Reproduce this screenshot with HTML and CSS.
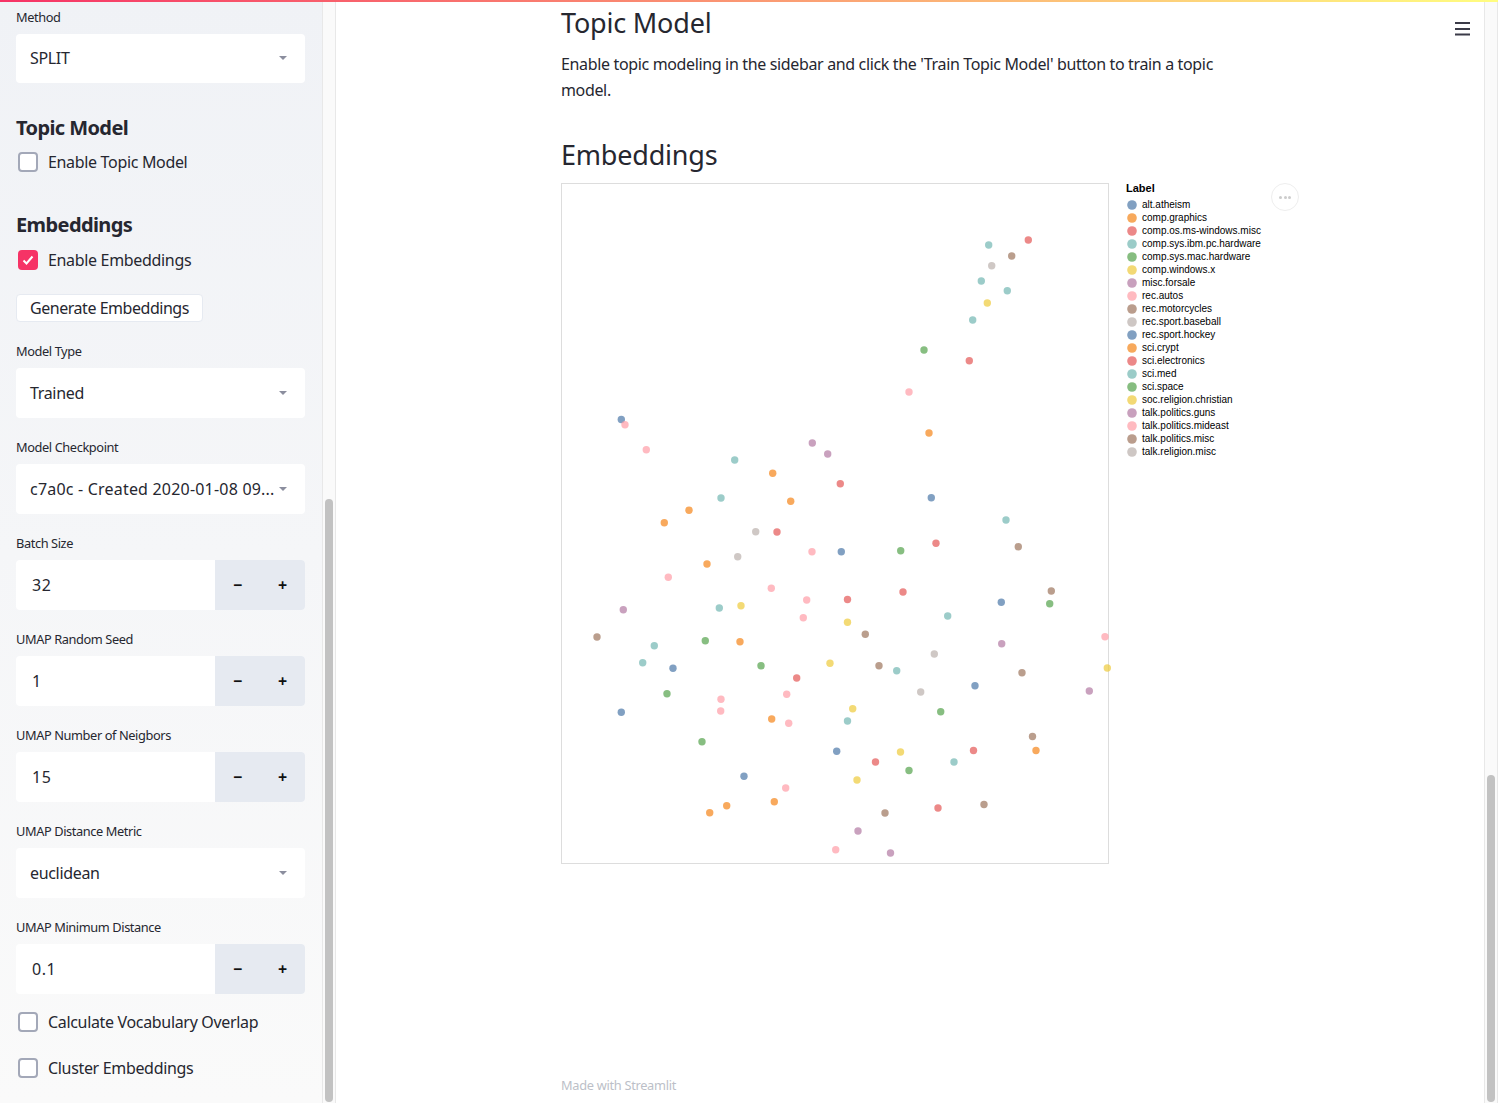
FILE: index.html
```html
<html>
  <head>
    <meta name="viewport" content="width=device-width, initial-scale=1.0">
    <link rel="stylesheet" href="styles.css">
  </head>
  <body>
    <div class="topBar"></div>

    <aside class="sidebar">
      <div class="field first">
        <label>Method</label>
        <div class="select short"><span>SPLIT</span><i class="caret"></i></div>
      </div>

      <h3 class="sideTitle topicTitle">Topic Model</h3>
      <div class="check"><span class="box"></span>Enable Topic Model</div>

      <h3 class="sideTitle embedTitle">Embeddings</h3>
      <div class="check"><span class="box on"><svg viewBox="0 0 20 20" width="20" height="20"><path d="M5.5 10.5l3 3 6-7" fill="none" stroke="#fff" stroke-width="2"/></svg></span>Enable Embeddings</div>
      <button class="genButton">Generate Embeddings</button>

      <div class="field">
        <label>Model Type</label>
        <div class="select"><span>Trained</span><i class="caret"></i></div>
      </div>
      <div class="field">
        <label>Model Checkpoint</label>
        <div class="select"><span class="checkpoint">c7a0c - Created 2020-01-08 09...</span><i class="caret"></i></div>
      </div>
      <div class="field">
        <label>Batch Size</label>
        <div class="number"><span class="value">32</span><span class="step">−</span><span class="step">+</span></div>
      </div>
      <div class="field">
        <label>UMAP Random Seed</label>
        <div class="number"><span class="value">1</span><span class="step">−</span><span class="step">+</span></div>
      </div>
      <div class="field">
        <label>UMAP Number of Neigbors</label>
        <div class="number"><span class="value">15</span><span class="step">−</span><span class="step">+</span></div>
      </div>
      <div class="field">
        <label>UMAP Distance Metric</label>
        <div class="select"><span>euclidean</span><i class="caret"></i></div>
      </div>
      <div class="field last">
        <label>UMAP Minimum Distance</label>
        <div class="number"><span class="value">0.1</span><span class="step">−</span><span class="step">+</span></div>
      </div>
      <div class="check"><span class="box"></span>Calculate Vocabulary Overlap</div>
      <div class="check spaced"><span class="box"></span>Cluster Embeddings</div>
    </aside>
    <div class="track"><div class="thumb sideThumb"></div></div>

    <main class="main">
      <h2>Topic Model</h2>
      <p>Enable topic modeling in the sidebar and click the 'Train Topic Model' button to train a topic<br>model.</p>
      <h2 class="embedHead">Embeddings</h2>

      <div class="chartRow">
        <div class="plot">
          <!-- viewBox is in page pixels so the points read like the screenshot -->
          <svg viewBox="562 184 546 679" width="546" height="679">
            <circle class="c0" cx="621.3" cy="419.5" r="3.7"/>
            <circle class="c7" cx="625" cy="424.7" r="3.7"/>
            <circle class="c7" cx="646.3" cy="449.7" r="3.7"/>
            <circle class="c6" cx="812.3" cy="443" r="3.7"/>
            <circle class="c6" cx="827.7" cy="454" r="3.7"/>
            <circle class="c3" cx="734.7" cy="460" r="3.7"/>
            <circle class="c1" cx="772.7" cy="473.3" r="3.7"/>
            <circle class="c2" cx="840.3" cy="483.7" r="3.7"/>
            <circle class="c3" cx="721" cy="498" r="3.7"/>
            <circle class="c1" cx="790.7" cy="501.3" r="3.7"/>
            <circle class="c1" cx="689" cy="510.3" r="3.7"/>
            <circle class="c1" cx="664.3" cy="522.7" r="3.7"/>
            <circle class="c9" cx="755.7" cy="531.7" r="3.7"/>
            <circle class="c2" cx="777" cy="532" r="3.7"/>
            <circle class="c7" cx="812" cy="551.7" r="3.7"/>
            <circle class="c0" cx="841.3" cy="551.7" r="3.7"/>
            <circle class="c9" cx="737.7" cy="556.7" r="3.7"/>
            <circle class="c1" cx="707" cy="564" r="3.7"/>
            <circle class="c7" cx="668.3" cy="577.3" r="3.7"/>
            <circle class="c7" cx="771.3" cy="588.3" r="3.7"/>
            <circle class="c7" cx="806.7" cy="600" r="3.7"/>
            <circle class="c2" cx="847.5" cy="599.5" r="3.7"/>
            <circle class="c5" cx="741" cy="605.7" r="3.7"/>
            <circle class="c3" cx="719.3" cy="608" r="3.7"/>
            <circle class="c6" cx="623.3" cy="609.7" r="3.7"/>
            <circle class="c7" cx="803.3" cy="617.7" r="3.7"/>
            <circle class="c5" cx="847.5" cy="622.3" r="3.7"/>

            <circle class="c2" cx="1028.3" cy="240" r="3.7"/>
            <circle class="c3" cx="988.7" cy="245" r="3.7"/>
            <circle class="c8" cx="1011.7" cy="256" r="3.7"/>
            <circle class="c9" cx="991.7" cy="265.7" r="3.7"/>
            <circle class="c3" cx="981.3" cy="281" r="3.7"/>
            <circle class="c3" cx="1007.3" cy="290.7" r="3.7"/>
            <circle class="c5" cx="987.3" cy="303" r="3.7"/>
            <circle class="c3" cx="972.7" cy="320" r="3.7"/>
            <circle class="c4" cx="924" cy="350" r="3.7"/>
            <circle class="c2" cx="969.3" cy="360.7" r="3.7"/>
            <circle class="c7" cx="909" cy="392" r="3.7"/>
            <circle class="c1" cx="929" cy="433" r="3.7"/>

            <circle class="c0" cx="931.3" cy="497.7" r="3.7"/>
            <circle class="c3" cx="1006" cy="520" r="3.7"/>
            <circle class="c2" cx="936" cy="543.3" r="3.7"/>
            <circle class="c4" cx="900.7" cy="550.7" r="3.7"/>
            <circle class="c8" cx="1018.3" cy="546.7" r="3.7"/>
            <circle class="c8" cx="1051.3" cy="591" r="3.7"/>
            <circle class="c4" cx="1049.7" cy="603.7" r="3.7"/>
            <circle class="c0" cx="1001.3" cy="602.3" r="3.7"/>
            <circle class="c2" cx="903" cy="592" r="3.7"/>
            <circle class="c3" cx="947.7" cy="616" r="3.7"/>
            <circle class="c8" cx="865.3" cy="634.3" r="3.7"/>
            <circle class="c7" cx="1105" cy="636.7" r="3.7"/>
            <circle class="c6" cx="1001.7" cy="643.7" r="3.7"/>
            <circle class="c9" cx="934.3" cy="654" r="3.7"/>
            <circle class="c8" cx="879" cy="665.7" r="3.7"/>
            <circle class="c3" cx="896.7" cy="670.7" r="3.7"/>
            <circle class="c8" cx="1022" cy="672.7" r="3.7"/>
            <circle class="c5" cx="1107.3" cy="668" r="3.7"/>
            <circle class="c0" cx="975" cy="685.7" r="3.7"/>
            <circle class="c9" cx="920.7" cy="692" r="3.7"/>
            <circle class="c6" cx="1089.3" cy="691" r="3.7"/>
            <circle class="c5" cx="852.7" cy="708.7" r="3.7"/>
            <circle class="c4" cx="940.7" cy="711.7" r="3.7"/>

            <circle class="c8" cx="597" cy="637" r="3.7"/>
            <circle class="c3" cx="654.3" cy="645.7" r="3.7"/>
            <circle class="c4" cx="705.3" cy="640.7" r="3.7"/>
            <circle class="c1" cx="740" cy="641.7" r="3.7"/>
            <circle class="c3" cx="642.7" cy="662.7" r="3.7"/>
            <circle class="c0" cx="673" cy="668.3" r="3.7"/>
            <circle class="c4" cx="761" cy="665.7" r="3.7"/>
            <circle class="c5" cx="830" cy="663.3" r="3.7"/>
            <circle class="c2" cx="796.7" cy="678" r="3.7"/>
            <circle class="c4" cx="667" cy="693.7" r="3.7"/>
            <circle class="c7" cx="786.7" cy="694.3" r="3.7"/>
            <circle class="c7" cx="721" cy="699.3" r="3.7"/>
            <circle class="c0" cx="621.3" cy="712.3" r="3.7"/>
            <circle class="c7" cx="720.7" cy="711" r="3.7"/>
            <circle class="c1" cx="771.7" cy="719" r="3.7"/>
            <circle class="c3" cx="847.5" cy="721" r="3.7"/>
            <circle class="c7" cx="788.7" cy="723.3" r="3.7"/>
            <circle class="c4" cx="702" cy="741.7" r="3.7"/>
            <circle class="c0" cx="836.7" cy="751.3" r="3.7"/>
            <circle class="c0" cx="744" cy="776.3" r="3.7"/>
            <circle class="c7" cx="785.7" cy="788" r="3.7"/>
            <circle class="c1" cx="774.3" cy="801.7" r="3.7"/>
            <circle class="c1" cx="726.7" cy="805.7" r="3.7"/>
            <circle class="c1" cx="709.7" cy="812.7" r="3.7"/>
            <circle class="c7" cx="835.7" cy="849.7" r="3.7"/>

            <circle class="c8" cx="1032.5" cy="736.5" r="3.7"/>
            <circle class="c1" cx="1036" cy="750.5" r="3.7"/>
            <circle class="c5" cx="900.5" cy="752" r="3.7"/>
            <circle class="c2" cx="973.5" cy="750.5" r="3.7"/>
            <circle class="c2" cx="875.5" cy="762" r="3.7"/>
            <circle class="c3" cx="954" cy="762" r="3.7"/>
            <circle class="c4" cx="909" cy="770.5" r="3.7"/>
            <circle class="c5" cx="857" cy="780" r="3.7"/>
            <circle class="c8" cx="984" cy="804.5" r="3.7"/>
            <circle class="c2" cx="938" cy="808" r="3.7"/>
            <circle class="c8" cx="885" cy="813" r="3.7"/>
            <circle class="c6" cx="858" cy="831" r="3.7"/>
            <circle class="c6" cx="890.5" cy="853" r="3.7"/>
          </svg>
        </div>

        <div class="legend">
          <div class="legendTitle">Label</div>
          <div class="legendRow"><svg class="c0" width="10" height="10"><circle cx="5" cy="5" r="4.8"/></svg>alt.atheism</div>
          <div class="legendRow"><svg class="c1" width="10" height="10"><circle cx="5" cy="5" r="4.8"/></svg>comp.graphics</div>
          <div class="legendRow"><svg class="c2" width="10" height="10"><circle cx="5" cy="5" r="4.8"/></svg>comp.os.ms-windows.misc</div>
          <div class="legendRow"><svg class="c3" width="10" height="10"><circle cx="5" cy="5" r="4.8"/></svg>comp.sys.ibm.pc.hardware</div>
          <div class="legendRow"><svg class="c4" width="10" height="10"><circle cx="5" cy="5" r="4.8"/></svg>comp.sys.mac.hardware</div>
          <div class="legendRow"><svg class="c5" width="10" height="10"><circle cx="5" cy="5" r="4.8"/></svg>comp.windows.x</div>
          <div class="legendRow"><svg class="c6" width="10" height="10"><circle cx="5" cy="5" r="4.8"/></svg>misc.forsale</div>
          <div class="legendRow"><svg class="c7" width="10" height="10"><circle cx="5" cy="5" r="4.8"/></svg>rec.autos</div>
          <div class="legendRow"><svg class="c8" width="10" height="10"><circle cx="5" cy="5" r="4.8"/></svg>rec.motorcycles</div>
          <div class="legendRow"><svg class="c9" width="10" height="10"><circle cx="5" cy="5" r="4.8"/></svg>rec.sport.baseball</div>
          <div class="legendRow"><svg class="c0" width="10" height="10"><circle cx="5" cy="5" r="4.8"/></svg>rec.sport.hockey</div>
          <div class="legendRow"><svg class="c1" width="10" height="10"><circle cx="5" cy="5" r="4.8"/></svg>sci.crypt</div>
          <div class="legendRow"><svg class="c2" width="10" height="10"><circle cx="5" cy="5" r="4.8"/></svg>sci.electronics</div>
          <div class="legendRow"><svg class="c3" width="10" height="10"><circle cx="5" cy="5" r="4.8"/></svg>sci.med</div>
          <div class="legendRow"><svg class="c4" width="10" height="10"><circle cx="5" cy="5" r="4.8"/></svg>sci.space</div>
          <div class="legendRow"><svg class="c5" width="10" height="10"><circle cx="5" cy="5" r="4.8"/></svg>soc.religion.christian</div>
          <div class="legendRow"><svg class="c6" width="10" height="10"><circle cx="5" cy="5" r="4.8"/></svg>talk.politics.guns</div>
          <div class="legendRow"><svg class="c7" width="10" height="10"><circle cx="5" cy="5" r="4.8"/></svg>talk.politics.mideast</div>
          <div class="legendRow"><svg class="c8" width="10" height="10"><circle cx="5" cy="5" r="4.8"/></svg>talk.politics.misc</div>
          <div class="legendRow"><svg class="c9" width="10" height="10"><circle cx="5" cy="5" r="4.8"/></svg>talk.religion.misc</div>
        </div>

        <div class="moreButton"><i></i><i></i><i></i></div>
      </div>

      <div class="footer">Made with Streamlit</div>

      <svg class="hamburger" viewBox="0 0 15 14" width="15" height="14"><path d="M0 0h15v2H0zM0 6h15v2H0zM0 11.5h15v2H0z" fill="#3b3b48"/></svg>
    </main>
    <div class="track"><div class="thumb mainThumb"></div></div>
  </body>
</html>
```

FILE: styles.css
```css
html, body {
  height: 100%;
}

body {
  display: flex;
  margin: 0;
  overflow: hidden;
  background-color: #fff;
  color: #262730;
  font-family: "Noto Sans", sans-serif;
  font-size: 16px;
  letter-spacing: -.33px;
}

.topBar {
  position: absolute;
  top: 0;
  left: 0;
  right: 0;
  height: 2px;
  background-image: linear-gradient(90deg, #f63366, #fffd80);
}

/* ===== Sidebar ===== */
.sidebar {
  width: 322px;
  flex: none;
  box-sizing: border-box;
  padding: 0 17px 0 16px;
  background-image: linear-gradient(180deg, #f0f2f6, #fafafa);
}

.field {
  margin-bottom: 21px;
}

.field.first {
  margin: 9px 0 0;
}

.field.last {
  margin-bottom: 16px;
}

.field label {
  display: block;
  height: 17px;
  margin-bottom: 8px;
  font-size: 12.8px;
  letter-spacing: -.4px;
  line-height: 17px;
}

.select, .number {
  display: flex;
  align-items: center;
  height: 50px;
  border-radius: 4px;
  background-color: #fff;
  overflow: hidden;
}

.select {
  justify-content: space-between;
  padding: 0 18px 0 14px;
}

.select.short {
  height: 49px;
  padding-bottom: 1px;
  box-sizing: border-box;
}

.select span {
  white-space: nowrap;
}

.select .checkpoint {
  letter-spacing: .2px;
}

.caret {
  flex: none;
  border-top: 4px solid #8b8e9e;
  border-left: 4px solid transparent;
  border-right: 4px solid transparent;
}

.number .value {
  flex: 1;
  padding-left: 16px;
  letter-spacing: .5px;
}

.step {
  display: flex;
  justify-content: center;
  align-items: center;
  width: 45px;
  height: 100%;
  background-color: #e6eaf1;
  color: #111;
  font-weight: 700;
}

.sideTitle {
  height: 28px;
  margin: 0 0 8px;
  font-size: 20px;
  font-weight: 700;
  letter-spacing: -.6px;
  line-height: 28px;
}

.topicTitle {
  margin-top: 31px;
}

.embedTitle {
  margin-top: 37px;
  margin-bottom: 9px;
}

.check {
  display: flex;
  align-items: center;
  height: 24px;
  padding-left: 2px;
}

.check.spaced {
  margin-top: 22px;
}

.box {
  display: block;
  width: 20px;
  height: 20px;
  box-sizing: border-box;
  margin-right: 10px;
  border: 2px solid #a3a8b8;
  border-radius: 4px;
  background-color: #fff;
}

.box.on {
  border: 0;
  background-color: #f63366;
}

.box svg {
  display: block;
}

.genButton {
  display: block;
  width: 187px;
  height: 28px;
  margin: 22px 0 21px;
  padding: 0;
  border: 1px solid #e6eaf1;
  border-radius: 4px;
  background-color: #fff;
  color: inherit;
  font-family: inherit;
  font-size: 16px;
  letter-spacing: -.47px;
}

/* ===== Scrollbars, drawn because the panels are frozen mid-scroll ===== */
.track {
  width: 14px;
  flex: none;
  box-sizing: border-box;
  padding: 0 2px;
  border-left: 1px solid #e8e8e8;
  border-right: 1px solid #e8e8e8;
  background-color: #fafafa;
}

.thumb {
  width: 8px;
  border-radius: 4px;
  background-color: #c2c2c2;
}

.sideThumb {
  height: 603px;
  margin-top: 499px;
}

.mainThumb {
  height: 327px;
  margin-top: 775px;
}

/* ===== Main ===== */
.main {
  flex: 1;
  padding: 5px 0 0 225px;
}

h2 {
  height: 36px;
  margin: 0;
  font-size: 27px;
  font-weight: 400;
  letter-spacing: -.2px;
  line-height: 36px;
}

p {
  margin: 10px 0 0;
  letter-spacing: -.35px;
  line-height: 26px;
}

.embedHead {
  margin: 34px 0 10px;
}

.chartRow {
  position: relative;
  display: flex;
}

.plot {
  width: 546px;
  height: 679px;
  border: 1px solid #ddd;
}

.plot svg {
  display: block;
  overflow: visible;
}

.c0 { fill: #4c78a8; opacity: .7; }
.c1 { fill: #f58518; opacity: .7; }
.c2 { fill: #e45756; opacity: .7; }
.c3 { fill: #72b7b2; opacity: .7; }
.c4 { fill: #54a24b; opacity: .7; }
.c5 { fill: #eeca3b; opacity: .7; }
.c6 { fill: #b279a2; opacity: .7; }
.c7 { fill: #ff9da6; opacity: .7; }
.c8 { fill: #9d755d; opacity: .7; }
.c9 { fill: #bab0ac; opacity: .7; }

.legend {
  margin-left: 17px;
  color: #000;
  font-family: "Liberation Sans", sans-serif;
  font-size: 10px;
  letter-spacing: 0;
}

.legendTitle {
  height: 15px;
  font-size: 11px;
  font-weight: 700;
  line-height: 11px;
}

.legendRow {
  display: flex;
  align-items: center;
  height: 13px;
  padding-left: 1px;
}

.legendRow svg {
  flex: none;
  margin-right: 5px;
}

.moreButton {
  position: absolute;
  top: 0;
  left: 710px;
  display: flex;
  justify-content: center;
  align-items: center;
  gap: 1.5px;
  width: 28px;
  height: 28px;
  box-sizing: border-box;
  border: 1px solid #eee;
  border-radius: 50%;
  background-color: #fff;
}

.moreButton i {
  width: 3px;
  height: 3px;
  border-radius: 50%;
  background-color: #ccc;
}

.footer {
  margin-top: 213px;
  color: #bcbfc8;
  font-size: 12.8px;
  letter-spacing: -.3px;
  line-height: 17px;
}

.hamburger {
  position: absolute;
  top: 22px;
  left: 1455px;
}
```
